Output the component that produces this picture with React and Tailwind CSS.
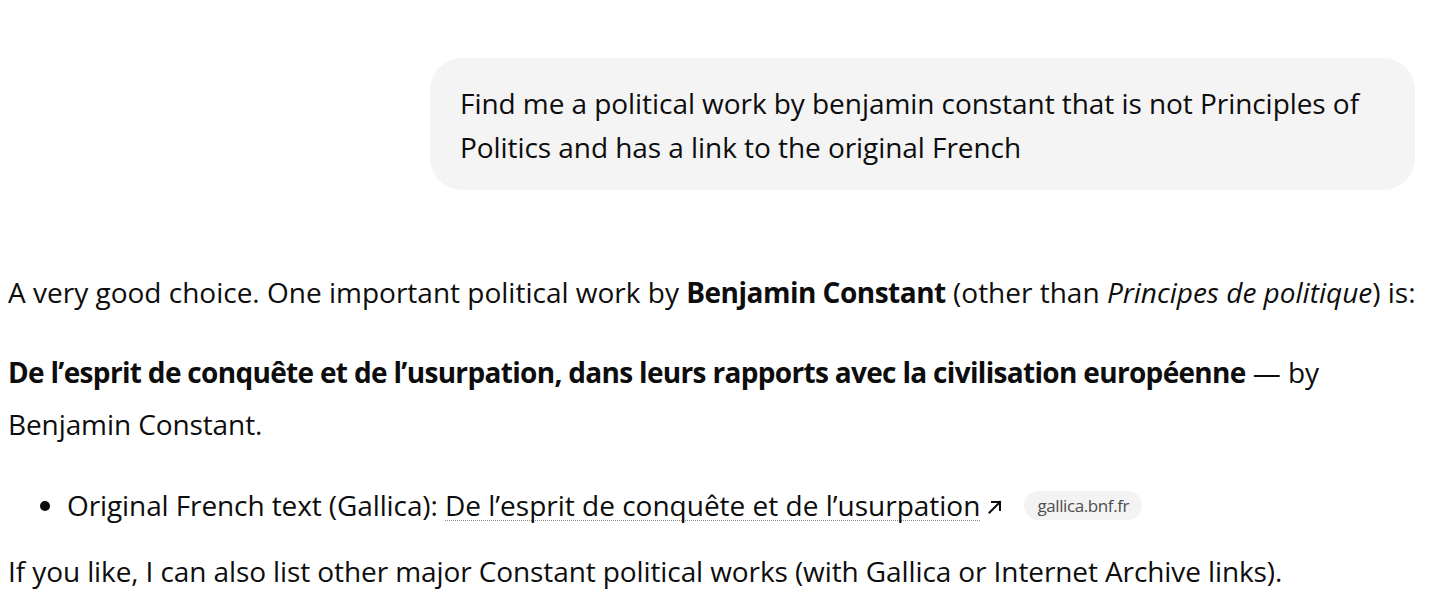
import React from "react";

export default function App() {
  return (
    <div
      className="w-[1456px] h-[610px] bg-white text-[#0d0d0d] overflow-hidden"
      style={{ fontFamily: '"Open Sans", "Noto Sans", sans-serif' }}
    >
      <div className="flex justify-end pt-[58px] pr-[41px]">
        <div className="w-[985px] bg-[#f4f4f4] rounded-[32px] px-[30px] pt-[23px] pb-[21px] text-[28px] leading-[44px] tracking-[-0.06px]">
          <span className="whitespace-nowrap">Find me a political work by benjamin constant that is not Principles of</span>
          <br />
          Politics and has a link to the original French
        </div>
      </div>

      <div className="pl-[8px] pt-[76px] text-[28px] leading-[52px] tracking-[-0.1px]">
        <p className="whitespace-nowrap tracking-[0px]">
          A very good choice. One important political work by <strong className="font-bold tracking-[-0.5px]">Benjamin Constant</strong> (other than <em>Principes de politique</em>) is:
        </p>
        <p className="mt-[28px]">
          <span className="whitespace-nowrap">
            <strong className="font-bold tracking-[-0.68px]">De l’esprit de conquête et de l’usurpation, dans leurs rapports avec la civilisation européenne</strong> — by
          </span>
          <br />
          Benjamin Constant.
        </p>
        <ul className="mt-[29px] pl-[59px] list-disc marker:text-[#0d0d0d]">
          <li className="whitespace-nowrap">
            <span className="inline-flex items-center">
              <span>Original French text (Gallica):&nbsp;</span>
              <span className="border-b border-dotted border-[#8a8a8a] leading-[30px] tracking-[0px]">De l’esprit de conquête et de l’usurpation</span>
              <svg width="16" height="14" viewBox="0 0 16 14" className="ml-[7px] mt-[3px]">
                <path d="M2.5 12.5 L13 2 M5 2 H13 V10" fill="none" stroke="#0d0d0d" strokeWidth="2" strokeLinecap="square" strokeLinejoin="miter" />
              </svg>
              <span className="ml-[21px] h-[29px] px-[13px] rounded-full bg-[#f3f3f3] text-[17px] leading-[29px] tracking-[-0.4px] text-[#4d4d4d]">gallica.bnf.fr</span>
            </span>
          </li>
        </ul>
        <p className="mt-[14px] whitespace-nowrap">
          If you like, I can also list other major Constant political works (with Gallica or Internet Archive links).
        </p>
      </div>
    </div>
  );
}
